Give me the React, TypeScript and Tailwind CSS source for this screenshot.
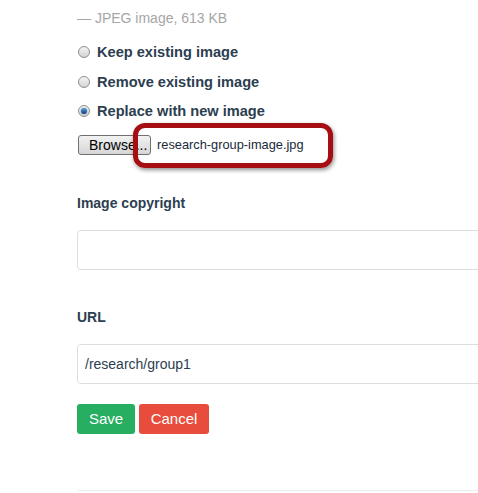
import React from 'react';

function Radio({ checked = false }: { checked?: boolean }) {
  return (
    <span className="relative flex h-[12px] w-[12px] items-center justify-center rounded-full border border-[#8e8f8f] bg-gradient-to-b from-[#f4f4f4] to-[#d4d4d4]">
      {checked && (
        <span className="h-[6px] w-[6px] rounded-full bg-gradient-to-b from-[#5aa0e0] to-[#0d3f7a] shadow-[0_0_1px_#0d3f7a]" />
      )}
    </span>
  );
}

export default function App() {
  const options = [
    { label: 'Keep existing image', checked: false },
    { label: 'Remove existing image', checked: false },
    { label: 'Replace with new image', checked: true },
  ];

  return (
    <div
      className="h-[493px] w-[478px] overflow-hidden bg-white pl-[77px] text-[14px]"
      style={{ fontFamily: '"Liberation Sans", Arial, sans-serif' }}
    >
      <div className="flex flex-col pt-[8px]">
        <p className="h-5 leading-5 text-[#a6a6a6]">— JPEG image, 613 KB</p>

        {/* radio options */}
        <div className="mt-[14px] flex flex-col gap-[9.5px]">
          {options.map((o) => (
            <label key={o.label} className="flex h-5 items-center gap-[7px] pl-[1px]">
              <Radio checked={o.checked} />
              <span className="text-[14.6px] font-bold leading-5 text-[#2c3e50]">{o.label}</span>
            </label>
          ))}
        </div>

        {/* file chooser */}
        <div className="relative mt-[14px] flex h-5 items-center gap-[6px] pl-[1px]">
          <button className="h-[20px] w-[73px] rounded-[3px] border border-[#707070] bg-gradient-to-b from-[#f2f2f2] to-[#d6d6d6] text-left pl-[10px] text-[14px] leading-[18px] text-black">
            Browse...
          </button>
          <span className="text-[12.8px] text-[#1a2a3a]">research-group-image.jpg</span>
          <div className="pointer-events-none absolute left-[56px] top-[-12px] h-[45px] w-[200px] rounded-[12px] border-[5px] border-[#a50e12] shadow-[1px_2px_4px_rgba(0,0,0,0.45)]" />
        </div>

        {/* copyright */}
        <p className="mt-[38px] h-5 font-bold leading-5 text-[#2c3e50]">Image copyright</p>
        <input className="mt-[17px] h-[40px] w-[440px] rounded-[4px] border border-[#dedede] px-[7px] outline-none" />

        {/* url */}
        <p className="mt-[37px] h-5 font-bold leading-5 text-[#2c3e50]">URL</p>
        <input
          defaultValue="/research/group1"
          className="mt-[17px] h-[40px] w-[440px] rounded-[4px] border border-[#dedede] px-[7px] text-[14px] text-[#2c3e50] outline-none"
        />

        {/* actions */}
        <div className="mt-[20px] flex gap-[4px]">
          <button className="h-[30px] w-[58px] rounded-[3px] bg-[#27ae60] text-[15px] text-white">Save</button>
          <button className="h-[30px] w-[70px] rounded-[3px] bg-[#e74c3c] text-[15px] text-white">Cancel</button>
        </div>

        <div className="mt-[56px] h-[1px] w-[440px] bg-[#eeeeee]" />
      </div>
    </div>
  );
}
